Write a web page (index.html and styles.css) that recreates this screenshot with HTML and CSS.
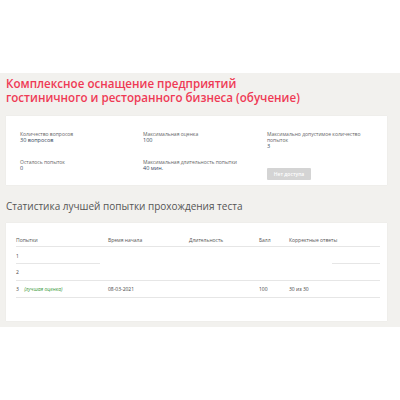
FILE: index.html
```html
<!DOCTYPE html>
<html lang="ru">
<head>
<meta charset="utf-8">
<link rel="stylesheet" href="styles.css">
</head>
<body>
<div class="top"></div>
<main class="page">
  <h1 class="title">Комплексное оснащение предприятий<br>гостиничного и ресторанного бизнеса (обучение)</h1>
  <section class="card info">
    <div class="item"><div class="label">Количество вопросов</div><div class="value">30 вопросов</div></div>
    <div class="item"><div class="label">Максимальная оценка</div><div class="value">100</div></div>
    <div class="item"><div class="label">Максимально допустимое количество<br>попыток</div><div class="value">3</div></div>
    <div class="item"><div class="label">Осталось попыток</div><div class="value">0</div></div>
    <div class="item"><div class="label">Максимальная длительность попытки</div><div class="value">40 мин.</div></div>
    <div class="item"><span class="btn">Нет доступа</span></div>
  </section>
  <h2 class="subtitle">Статистика лучшей попытки прохождения теста</h2>
  <section class="card stats">
    <div class="row head"><span>Попытки</span><span>Время начала</span><span>Длительность</span><span>Балл</span><span>Корректные ответы</span></div>
    <div class="row r1"><span>1</span><span></span><span></span><span></span><span></span></div>
    <div class="row"><span>2</span><span></span><span></span><span></span><span></span></div>
    <div class="row"><span>3 <em class="best">(лучшая оценка)</em></span><span>08-03-2021</span><span></span><span>100</span><span>30 из 30</span></div>
  </section>
</main>
</body>
</html>
```
FILE: styles.css
```css
html, body { margin: 0; padding: 0; background: #fff; }
body { font-family: "Open Sans", "Liberation Sans", sans-serif; }
.top { height: 73px; }
.page {
  background: #f2f1ee;
  padding: 4px 13px 7px 6px;
  height: 254px;
  box-sizing: border-box;
}
.title {
  margin: 0;
  color: #ef3a55;
  font-size: 11.6px;
  line-height: 14px;
  font-weight: 600;
}
.card {
  background: #fff;
  box-shadow: 0 0 1px rgba(0,0,0,0.08);
}
.info {
  margin-top: 11px;
  height: 69px;
  box-sizing: border-box;
  padding: 15px 8px 0 14px;
  display: grid;
  grid-template-columns: 123px 124px 1fr;
  row-gap: 10px;
  align-content: start;
}
.label { font-size: 5px; line-height: 6px; color: #666; }
.value { font-size: 5.5px; line-height: 6px; color: #34465c; font-weight: 500; }
.btn {
  display: inline-block;
  width: 44px; height: 12px;
  line-height: 12px;
  text-align: center;
  background: #d4d4d4;
  color: #fff;
  font-size: 5px;
  font-weight: 600;
  border-radius: 1px;
  margin-top: -1px;
}
.subtitle {
  margin: 14px 0 10px;
  font-size: 10px;
  line-height: 14px;
  font-weight: 400;
  color: #555;
}
.stats {
  padding: 10px 7px 23px 10px;
}
.row {
  display: grid;
  grid-template-columns: 92px 81px 70px 30px 1fr;
  height: 17px;
  align-items: center;
  font-size: 5px;
  color: #444;
  border-bottom: 1px solid #e6e6e6;
  box-sizing: border-box;
}
.row.head { height: 14px; font-weight: 500; color: #555; }
.row.r1 {
  border-bottom: 0;
  background: linear-gradient(to right, #e6e6e6 0 84px, transparent 84px 316px, #e6e6e6 316px) bottom / 100% 1px no-repeat;
}
.best { font-style: italic; color: #3a9a3a; margin-left: 4px; }
```
